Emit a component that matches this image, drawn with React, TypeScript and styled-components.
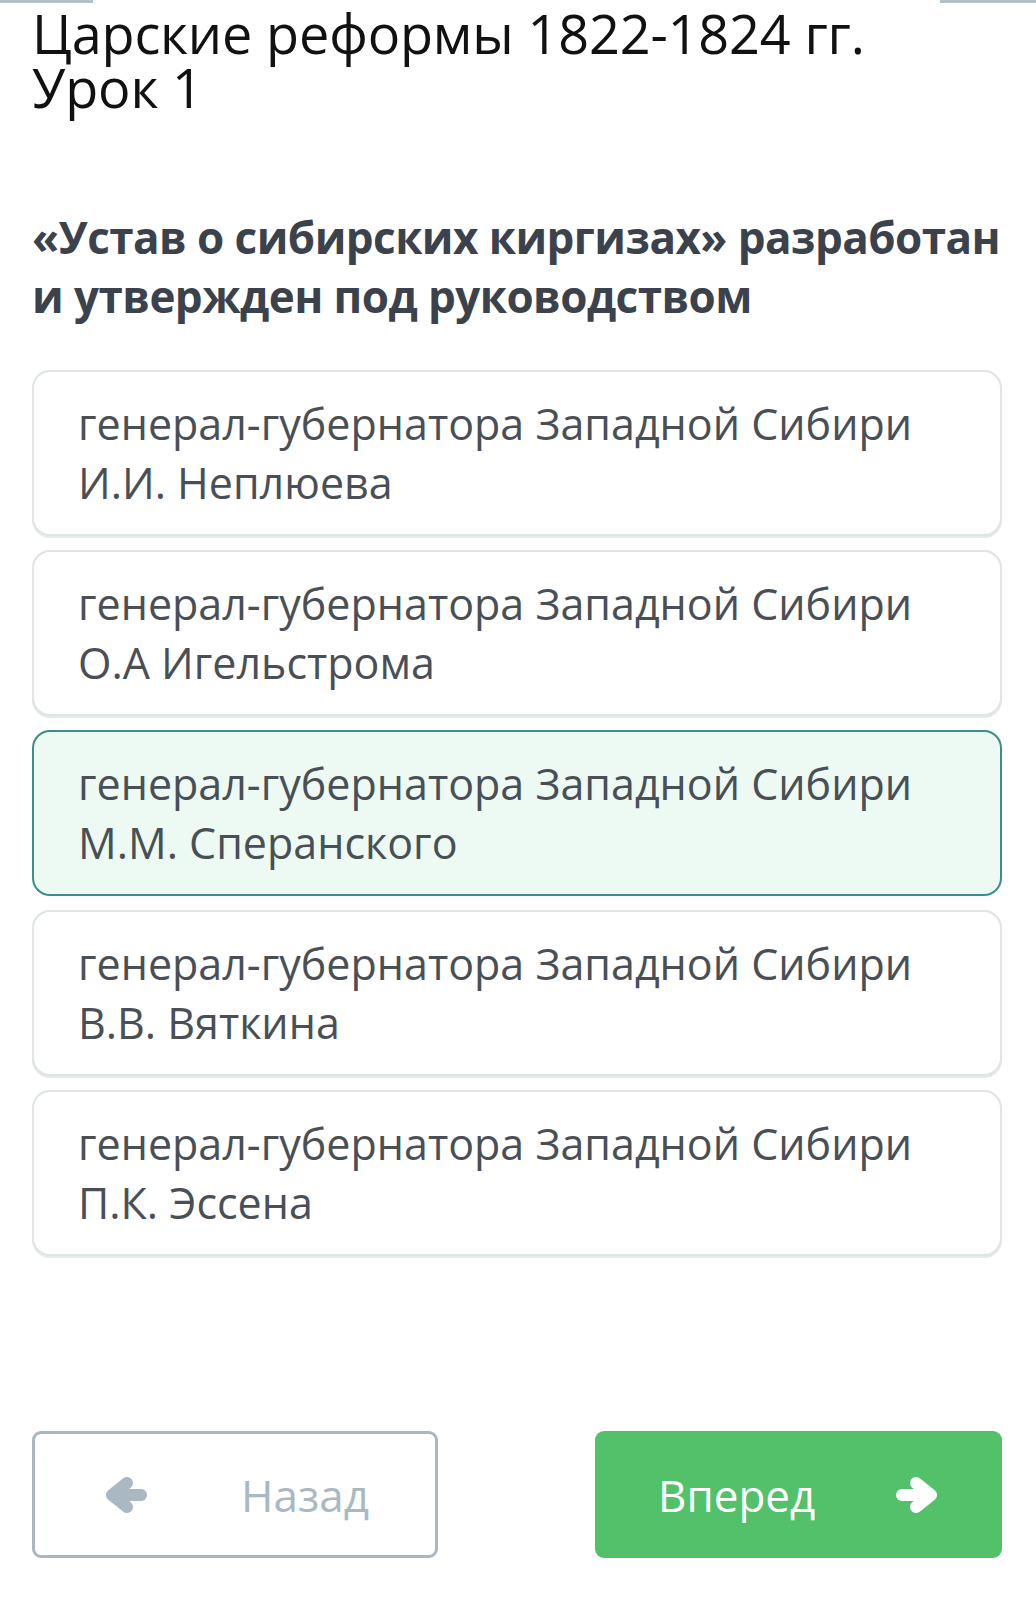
import styled, { createGlobalStyle } from 'styled-components'

const GlobalStyle = createGlobalStyle`
  html, body {
    margin: 0;
    padding: 0;
    background: #ffffff;
  }
  body {
    font-family: "Open Sans", "Noto Sans", sans-serif;
  }
`

const answers = [
  { name: 'И.И. Неплюева', selected: false },
  { name: 'О.А Игельстрома', selected: false },
  { name: 'М.М. Сперанского', selected: true },
  { name: 'В.В. Вяткина', selected: false },
  { name: 'П.К. Эссена', selected: false },
]

function Arrow({ dir }: { dir: 'left' | 'right' }) {
  return (
    <ArrowSvg viewBox="0 0 42 38" $flip={dir === 'right'}>
      <line x1="9" y1="19" x2="36" y2="19" />
      <polyline points="22,7 7,19 22,31" />
    </ArrowSvg>
  )
}

function App() {
  return (
    <Page>
      <GlobalStyle />
      <TopStrip>
        <StripPiece $width={93} />
        <StripPiece $width={96} />
      </TopStrip>
      <Title>
        Царские реформы 1822-1824 гг.
        <br />
        Урок 1
      </Title>
      <Question>
        «Устав о сибирских киргизах» разработан и утвержден под руководством
      </Question>
      <AnswerList>
        {answers.map((a) => (
          <Answer key={a.name} $selected={a.selected}>
            генерал-губернатора Западной Сибири
            <br />
            {a.name}
          </Answer>
        ))}
      </AnswerList>
      <Footer>
        <BackButton>
          <Arrow dir="left" />
          <span>Назад</span>
        </BackButton>
        <NextButton>
          <span>Вперед</span>
          <Arrow dir="right" />
        </NextButton>
      </Footer>
    </Page>
  )
}

const Page = styled.div`
  width: 1036px;
  min-height: 1620px;
  box-sizing: border-box;
  padding: 0 34px 0 32px;
`

const TopStrip = styled.div`
  display: flex;
  justify-content: space-between;
  margin: 0 -34px 0 -32px;
  height: 3px;
`

const StripPiece = styled.div<{ $width: number }>`
  width: ${(p) => p.$width}px;
  height: 3px;
  background: #b4c0c7;
`

const Title = styled.h1`
  margin: 3px 0 0 0;
  font-size: 54px;
  line-height: 54px;
  font-weight: 400;
  color: #111111;
  letter-spacing: -0.15px;
`

const Question = styled.h2`
  margin: 94px -30px 0 0;
  font-size: 44px;
  line-height: 59px;
  font-weight: 700;
  color: #3c424c;
  letter-spacing: -0.55px;
`

const AnswerList = styled.div`
  display: flex;
  flex-direction: column;
  gap: 14px;
  margin-top: 44px;
`

const Answer = styled.div<{ $selected: boolean }>`
  box-sizing: border-box;
  height: 166px;
  padding: 22px 20px 0 44px;
  border-radius: 18px;
  border: 2px solid ${(p) => (p.$selected ? '#3b8f86' : '#dfe4e4')};
  background: ${(p) => (p.$selected ? '#ecfaf3' : '#ffffff')};
  box-shadow: 0 2px 0 ${(p) => (p.$selected ? 'transparent' : '#e6eaea')};
  font-size: 43px;
  line-height: 59px;
  color: #4a4f56;
`

const Footer = styled.div`
  display: flex;
  justify-content: space-between;
  margin-top: 175px;
`

const ButtonBase = styled.div`
  box-sizing: border-box;
  width: 407px;
  height: 127px;
  border-radius: 9px;
  display: flex;
  align-items: center;
  justify-content: space-between;
  font-size: 44px;
`

const BackButton = styled(ButtonBase)`
  width: 406px;
  border: 3px solid #a9b7c1;
  padding: 0 66px 0 70px;
  color: #a9b8c3;
  background: #ffffff;
`

const NextButton = styled(ButtonBase)`
  background: #52c16a;
  color: #ffffff;
  padding: 0 64px 0 63px;
`

const ArrowSvg = styled.svg<{ $flip: boolean }>`
  width: 42px;
  height: 38px;
  fill: none;
  stroke: currentColor;
  stroke-width: 12;
  stroke-linecap: round;
  stroke-linejoin: round;
  transform: ${(p) => (p.$flip ? 'scaleX(-1)' : 'none')};
`

export default App
